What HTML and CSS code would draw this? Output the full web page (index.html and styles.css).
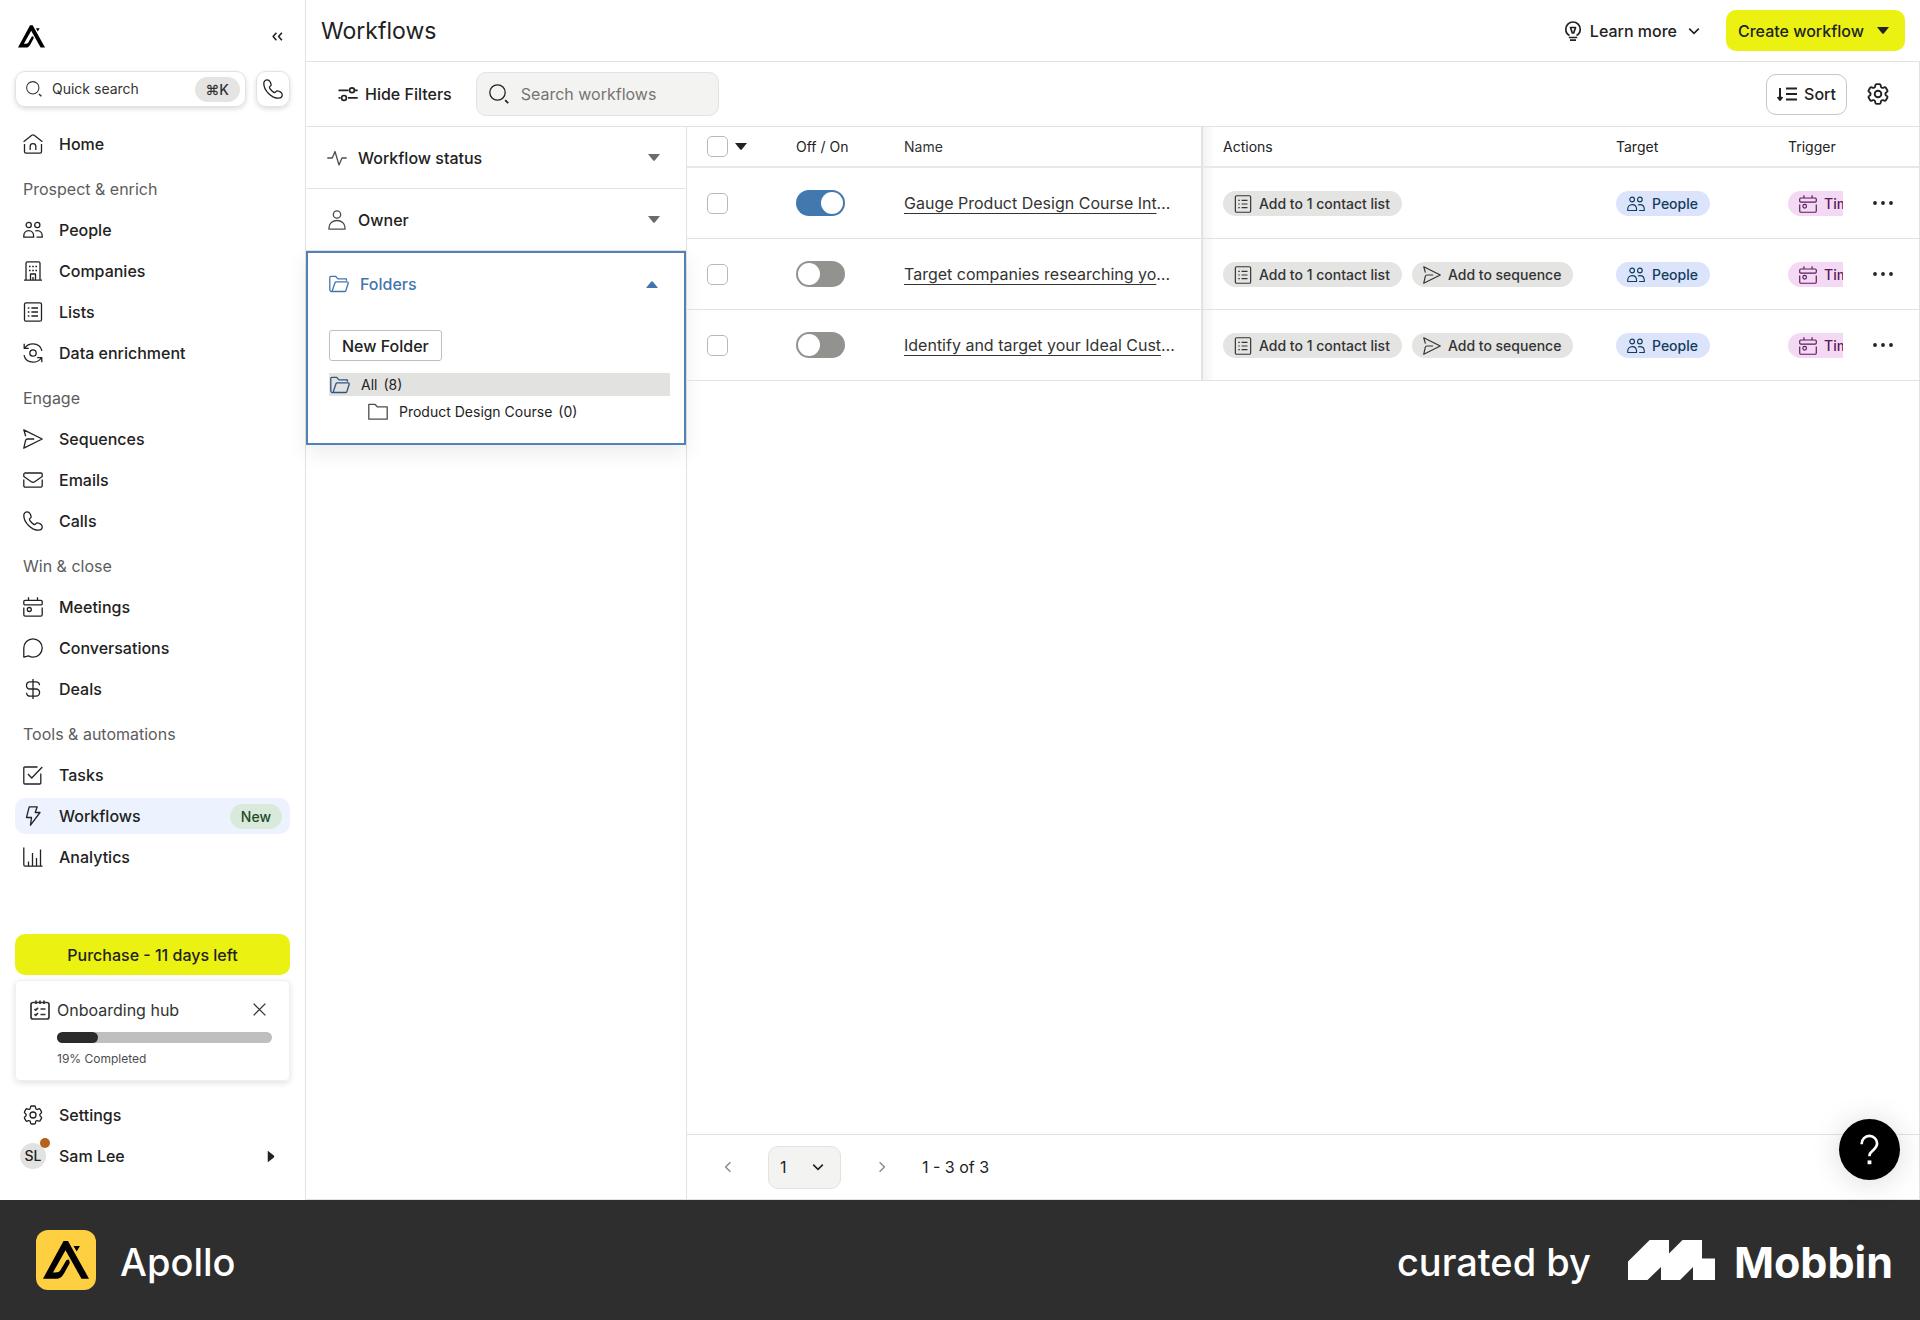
FILE: index.html
```html
<!DOCTYPE html>
<html lang="en">
<head>
<meta charset="UTF-8">
<meta name="viewport" content="width=device-width, initial-scale=1.0">
<title>Workflows - Apollo</title>
<link rel="stylesheet" href="styles.css">
</head>

<body>

<!-- Icon sprite -->
<svg class="sprite" aria-hidden="true">
  <symbol id="i-logo" viewBox="0 0 46 38"><path fill="currentColor" stroke="none" d="M20.5 0h4.500L46 37.700h-7.500L22.500 9.300 10 31.500h2c4 0 5-1.300 7-5l4.500-7.500 2.500-.500.800 3.500L21 32.500c-2.500 4-4 5.200-8 5.200H0zM30.500 5h6.400l-3.200 5.500z"/></symbol>
  <symbol id="i-collapse" viewBox="0 0 20 20"><path stroke-width="2.800" d="M8 3 2 10l6 7M18 3l-6 7 6 7"/></symbol>
  <symbol id="i-search" viewBox="0 0 20 20"><circle cx="8.500" cy="8.500" r="7.700"/><path stroke-width="1.800" d="m16.200 16.200 3 3"/></symbol>
  <symbol id="i-phone" viewBox="0 0 20 20"><path d="M4.200.8c1.200 0 2.200.6 2.900 1.900l.9 2c.4 1 .1 2-.8 2.600-.9.6-.9 1.400-.3 2.300 1 1.500 2.100 2.600 3.500 3.500.9.6 1.700.5 2.300-.3.7-.9 1.600-1.200 2.600-.8l2 .9c1.300.7 1.900 1.600 1.900 2.900 0 2-1.600 3.400-3.600 3.400C8.600 19.200.8 11.400.8 4.400.8 2.400 2.200.8 4.200.8z"/></symbol>
  <symbol id="i-home" viewBox="0 0 20 20"><path d="M.6 7.800 8.800 1.300a2 2 0 0 1 2.400 0l8.200 6.500M1.500 10v7.800a1.400 1.400 0 0 0 1.400 1.400h14.200a1.400 1.400 0 0 0 1.400-1.400V10M7.200 16v-3.500a2.800 2.800 0 0 1 5.600 0V16"/></symbol>
  <symbol id="i-people" viewBox="0 0 20 20"><circle cx="5.700" cy="5" r="2.600"/><circle cx="14.300" cy="5" r="2.600"/><path d="M.8 17.200v-1.400c0-3 2-5.200 4.900-5.200s4.900 2.200 4.900 5.200v1.400zM12.200 11c.6-.3 1.300-.4 2.100-.4 2.900 0 4.900 2.200 4.900 5.200v1.400h-5.700"/></symbol>
  <symbol id="i-building" viewBox="0 0 20 20"><path d="M1 19.200h18M3 19V2.200A1.400 1.400 0 0 1 4.400.8h11.200A1.400 1.400 0 0 1 17 2.200V19M7.500 19v-6h5v6M10 16v3M6 5.500h1.600M9.200 5.500h1.600M12.400 5.500H14M6 9.500h1.600M9.200 9.500h1.600M12.400 9.500H14"/></symbol>
  <symbol id="i-list" viewBox="0 0 20 20"><rect x="1.500" y=".8" width="17" height="18.400" rx="1.500"/><path d="M4.800 6h1.600M8.400 6h6.600M4.800 10h1.600M8.400 10h6.600M4.800 14h1.600M8.400 14h6.600"/></symbol>
  <symbol id="i-enrich" viewBox="0 0 20 20"><circle cx="10" cy="10" r="3.200"/><path d="M1.200.8v4.600h4.600M1.800 5C3.500 2.400 6.500.8 10 .8c4.500 0 8 2.800 9 7M18.800 19.200v-4.600h-4.600M18.200 15c-1.700 2.600-4.700 4.200-8.200 4.200-4.500 0-8-2.800-9-7"/></symbol>
  <symbol id="i-send" viewBox="0 0 20 20"><path d="M2.700 7.300.8.8 19.200 10 .8 19.200l1.700-7.600A2.200 2.200 0 0 1 4.700 10h6.500"/></symbol>
  <symbol id="i-mail" viewBox="0 0 20 20"><path d="M.8 6.500V4.300a1.300 1.300 0 0 1 1.300-1.300h15.800a1.300 1.300 0 0 1 1.300 1.300v2.200l-7.500 5.300a3 3 0 0 1-3.400 0zM.8 9.500v6.300a1.300 1.300 0 0 0 1.300 1.300h15.800a1.300 1.300 0 0 0 1.300-1.300V9.500"/></symbol>
  <symbol id="i-calendar" viewBox="0 0 20 20"><path d="M5.500.3v3M14.500.3v3M.8 10.500v7.300a1.400 1.400 0 0 0 1.400 1.400h15.600a1.400 1.400 0 0 0 1.400-1.400v-7.300"/><rect x=".8" y="3.300" width="18.400" height="4.600" rx="1.200"/><circle cx="6.300" cy="12.500" r="2"/></symbol>
  <symbol id="i-chat" viewBox="0 0 20 20"><path d="M.8 19.200V10A9.200 9.200 0 1 1 10 19.200c-1.800 0-3.200-.5-4.400-1.300z"/></symbol>
  <symbol id="i-dollar" viewBox="0 0 20 20"><path d="M10 0v20M16.500 6.200V6c0-1.900-1.500-3.200-3.400-3.200H7A3.400 3.400 0 0 0 3.500 6.200C3.500 8.400 5 10 7 10h6a3.600 3.600 0 0 1 0 7.200H6.900a3.400 3.400 0 0 1-3.400-3.400"/></symbol>
  <symbol id="i-task" viewBox="0 0 20 20"><path d="M14.500 2H1.900A1.100 1.100 0 0 0 .8 3.100v14.800A1.100 1.100 0 0 0 1.900 19h14.800a1.100 1.100 0 0 0 1.100-1.100V8.500M5 9l3.700 4L19.300 2"/></symbol>
  <symbol id="i-bolt" viewBox="0 0 20 20"><path d="M6.200.8h8l-2 5.700H17L7.500 19.200l1-7.700H3.500z"/></symbol>
  <symbol id="i-chart" viewBox="0 0 20 20"><path d="M.8.500v17.300a1.400 1.400 0 0 0 1.400 1.400H19.500M5.500 19v-4.500M9.500 19V6M13.500 19v-8M17.500 19V2.500"/></symbol>
  <symbol id="i-gear" viewBox="2 2 20 20"><circle cx="12" cy="12" r="3"/><path d="M9.594 3.940c.09-.542.56-.94 1.110-.94h2.593c.55 0 1.020.398 1.110.94l.213 1.281c.063.374.313.686.645.87.074.04.147.083.22.127.325.196.72.257 1.075.124l1.217-.456a1.125 1.125 0 0 1 1.370.49l1.296 2.247a1.125 1.125 0 0 1-.26 1.431l-1.003.827c-.293.241-.438.613-.43.992a7.723 7.723 0 0 1 0 .255c-.008.378.137.75.43.991l1.004.827c.424.35.534.955.26 1.430l-1.298 2.247a1.125 1.125 0 0 1-1.369.491l-1.217-.456c-.355-.133-.75-.072-1.076.124a6.470 6.470 0 0 1-.22.128c-.331.183-.581.495-.644.869l-.213 1.281c-.09.543-.56.94-1.110.94h-2.594c-.55 0-1.019-.398-1.110-.94l-.213-1.281c-.062-.374-.312-.686-.644-.87a6.520 6.520 0 0 1-.22-.127c-.325-.196-.72-.257-1.076-.124l-1.217.456a1.125 1.125 0 0 1-1.369-.49l-1.297-2.247a1.125 1.125 0 0 1 .26-1.431l1.004-.827c.292-.24.437-.613.43-.991a6.932 6.932 0 0 1 0-.255c.007-.38-.138-.751-.43-.992l-1.004-.827a1.125 1.125 0 0 1-.26-1.430l1.297-2.247a1.125 1.125 0 0 1 1.370-.491l1.216.456c.356.133.751.072 1.076-.124.072-.044.146-.086.22-.128.332-.183.582-.495.644-.869l.214-1.280Z"/></symbol>
  <symbol id="i-checklist" viewBox="0 0 20 20"><rect x="1" y="2.500" width="18" height="16.500" rx="2"/><path d="M6 .5v3.500M10 .5v3.500M14 .5v3.500M4.500 9l1.200 1.200L8 7.800M10.500 9H15.500M4.500 14.200l1.200 1.200L8 13M10.500 14.500H15.500"/></symbol>
  <symbol id="i-close" viewBox="0 0 20 20"><path stroke-width="2" d="m1 1 18 18M19 1 1 19"/></symbol>
  <symbol id="i-bulb" viewBox="0 0 20 20"><path d="M6.500 14.500C4 13.200 2.800 11 2.800 8.200a7.200 7.200 0 0 1 14.400 0c0 2.800-1.200 5-3.700 6.300M7.500 6.500h5L10.700 12H9.300zM5.800 16.500h8.400M7 19.200h6"/></symbol>
  <symbol id="i-chevron" viewBox="0 0 20 20"><path stroke-width="2.600" d="m2 6 8 8 8-8"/></symbol>
  <symbol id="i-caret" viewBox="0 0 12 7"><path fill="currentColor" stroke="none" d="M0 0h12L7 6.300a1.400 1.400 0 0 1-2 0z"/></symbol>
  <symbol id="i-filters" viewBox="0 0 20 20"><path d="M.5 6.300h10M17 6.300h2.700M.5 13.900h2M10 13.900h9.700"/><circle cx="14" cy="6.300" r="2.400"/><circle cx="6" cy="13.900" r="2.400"/></symbol>
  <symbol id="i-pulse" viewBox="0 0 20 20"><path d="M.3 10h5L8 3.500 12 17l3-7h4.700"/></symbol>
  <symbol id="i-user" viewBox="0 0 20 20"><circle cx="10" cy="4.500" r="3.700"/><path d="M2 19.200v-1.700a8 7 0 0 1 16 0v1.700z"/></symbol>
  <symbol id="i-folder-open" viewBox="0 0 20 20"><path d="M3 17.500a1.800 1.800 0 0 1-2.200-1.700V3.500a1.200 1.200 0 0 1 1.200-1.200h4.500l2.500 2.600h8.400v1.800M3 17.500 6 8.700a1.200 1.200 0 0 1 1.200-.8h11a1 1 0 0 1 1 1.300l-2.400 7.500a1.200 1.200 0 0 1-1.200.8z"/></symbol>
  <symbol id="i-folder" viewBox="0 0 20 20"><path d="M.8 17.200V2.300h6l2.500 2.500h9.900v12.400z"/></symbol>
  <symbol id="i-sort" viewBox="0 0 20 20"><path stroke-width="2" d="M3 4v12M.6 13 3 16l2.400-3M9 4.500h11M9 10h11M9 15.500h11"/></symbol>
  <symbol id="i-dots" viewBox="0 0 20 20"><g fill="currentColor" stroke="none"><circle cx="2" cy="10" r="1.900"/><circle cx="10" cy="10" r="1.900"/><circle cx="18" cy="10" r="1.900"/></g></symbol>
  <symbol id="i-help" viewBox="0 0 20 32"><path stroke-width="2.800" d="M1.800 10.500V9.800a8 8 0 0 1 16.200 0c0 3-1.500 4.500-3.600 6.400S10 19.300 10 22.200v1"/><rect x="8" y="27.500" width="4" height="4" fill="currentColor" stroke="none"/></symbol>
  <symbol id="i-mobbin" viewBox="0 0 87 40"><path fill="currentColor" stroke="none" d="M0 21.600 21.700 0H41v13.500L54.500 0H74v18.500h13V40H65V27L52 40H33V27L19.500 40H0z"/></symbol>
</svg>

<div class="app">

  <aside class="sidebar">
    <div class="sidebar-top">
      <a href="#" class="logo" aria-label="Apollo"><svg><use href="#i-logo"/></svg></a>
      <button class="collapse" aria-label="Collapse sidebar"><svg><use href="#i-collapse"/></svg></button>
    </div>

    <div class="quick">
      <button class="quick-search">
        <svg class="icon small"><use href="#i-search"/></svg>
        <span>Quick search</span>
        <kbd>⌘K</kbd>
      </button>
      <button class="quick-call" aria-label="Call"><svg class="icon"><use href="#i-phone"/></svg></button>
    </div>

    <nav class="nav">
      <a href="#"><svg class="icon"><use href="#i-home"/></svg>Home</a>
      <h2>Prospect &amp; enrich</h2>
      <a href="#"><svg class="icon"><use href="#i-people"/></svg>People</a>
      <a href="#"><svg class="icon"><use href="#i-building"/></svg>Companies</a>
      <a href="#"><svg class="icon"><use href="#i-list"/></svg>Lists</a>
      <a href="#"><svg class="icon"><use href="#i-enrich"/></svg>Data enrichment</a>
      <h2>Engage</h2>
      <a href="#"><svg class="icon"><use href="#i-send"/></svg>Sequences</a>
      <a href="#"><svg class="icon"><use href="#i-mail"/></svg>Emails</a>
      <a href="#"><svg class="icon"><use href="#i-phone"/></svg>Calls</a>
      <h2>Win &amp; close</h2>
      <a href="#"><svg class="icon"><use href="#i-calendar"/></svg>Meetings</a>
      <a href="#"><svg class="icon"><use href="#i-chat"/></svg>Conversations</a>
      <a href="#"><svg class="icon"><use href="#i-dollar"/></svg>Deals</a>
      <h2>Tools &amp; automations</h2>
      <a href="#"><svg class="icon"><use href="#i-task"/></svg>Tasks</a>
      <a href="#" class="active"><svg class="icon"><use href="#i-bolt"/></svg>Workflows<span class="badge-new">New</span></a>
      <a href="#"><svg class="icon"><use href="#i-chart"/></svg>Analytics</a>
    </nav>

    <div class="sidebar-bottom">
      <button class="btn-primary purchase">Purchase - 11 days left</button>

      <div class="onboarding">
        <div class="onboarding-head">
          <svg class="icon heavy"><use href="#i-checklist"/></svg>
          <span>Onboarding hub</span>
          <button class="close" aria-label="Close"><svg><use href="#i-close"/></svg></button>
        </div>
        <div class="progress"><div class="progress-bar" style="width: 19%"></div></div>
        <p>19% Completed</p>
      </div>

      <div class="nav">
        <a href="#"><svg class="icon"><use href="#i-gear"/></svg>Settings</a>
        <a href="#"><span class="avatar">SL</span>Sam Lee<svg class="caret right"><use href="#i-caret"/></svg></a>
      </div>
    </div>
  </aside>

  <main class="main">
    <header class="topbar">
      <h1>Workflows</h1>
      <button class="btn-text learn"><svg class="icon heavy"><use href="#i-bulb"/></svg>Learn more<svg class="chevron"><use href="#i-chevron"/></svg></button>
      <button class="btn-primary create">Create workflow<svg class="caret"><use href="#i-caret"/></svg></button>
    </header>

    <div class="toolbar">
      <button class="btn-text filters-toggle"><svg class="icon heavy"><use href="#i-filters"/></svg>Hide Filters</button>
      <label class="search">
        <svg class="icon"><use href="#i-search"/></svg>
        <input type="text" placeholder="Search workflows" aria-label="Search workflows">
      </label>
      <button class="btn-sort"><svg class="icon"><use href="#i-sort"/></svg>Sort</button>
      <button class="btn-gear" aria-label="Table settings"><svg class="icon heavy"><use href="#i-gear"/></svg></button>
    </div>

    <div class="content">
      <div class="filters">
        <button class="filter-head"><svg class="icon"><use href="#i-pulse"/></svg>Workflow status<svg class="caret"><use href="#i-caret"/></svg></button>
        <button class="filter-head"><svg class="icon"><use href="#i-user"/></svg>Owner<svg class="caret"><use href="#i-caret"/></svg></button>
        <section class="filter-open">
          <button class="filter-head"><svg class="icon"><use href="#i-folder-open"/></svg>Folders<svg class="caret up"><use href="#i-caret"/></svg></button>
          <div class="folders">
            <button class="btn-folder">New Folder</button>
            <ul>
              <li class="selected"><svg class="icon"><use href="#i-folder-open"/></svg>All <span>(8)</span></li>
              <li class="child"><svg class="icon"><use href="#i-folder"/></svg>Product Design Course <span>(0)</span></li>
            </ul>
          </div>
        </section>
      </div>

      <div class="results">
        <table>
          <colgroup>
            <col class="c-check"><col class="c-toggle"><col class="c-name"><col class="c-actions"><col class="c-target"><col class="c-trigger"><col class="c-menu">
          </colgroup>
          <thead>
            <tr>
              <th><div class="check-all"><input type="checkbox" class="check" aria-label="Select all"><svg class="caret"><use href="#i-caret"/></svg></div></th>
              <th>Off / On</th>
              <th class="name">Name</th>
              <th class="actions">Actions</th>
              <th>Target</th>
              <th class="trigger">Trigger</th>
              <th></th>
            </tr>
          </thead>
          <tbody>
            <tr>
              <td><input type="checkbox" class="check" aria-label="Select workflow"></td>
              <td><input type="checkbox" role="switch" class="switch" aria-label="Workflow on" checked></td>
              <td class="name"><a href="#">Gauge Product Design Course Interest</a></td>
              <td class="actions"><span class="chip"><svg class="icon"><use href="#i-list"/></svg>Add to 1 contact list</span></td>
              <td><span class="chip people"><svg class="icon"><use href="#i-people"/></svg>People</span></td>
              <td class="trigger"><span class="chip time"><svg class="icon"><use href="#i-calendar"/></svg>Time-based</span></td>
              <td class="menu"><button aria-label="More"><svg class="icon"><use href="#i-dots"/></svg></button></td>
            </tr>
            <tr>
              <td><input type="checkbox" class="check" aria-label="Select workflow"></td>
              <td><input type="checkbox" role="switch" class="switch" aria-label="Workflow on"></td>
              <td class="name"><a href="#">Target companies researching your keywords</a></td>
              <td class="actions"><span class="chip"><svg class="icon"><use href="#i-list"/></svg>Add to 1 contact list</span><span class="chip"><svg class="icon"><use href="#i-send"/></svg>Add to sequence</span></td>
              <td><span class="chip people"><svg class="icon"><use href="#i-people"/></svg>People</span></td>
              <td class="trigger"><span class="chip time"><svg class="icon"><use href="#i-calendar"/></svg>Time-based</span></td>
              <td class="menu"><button aria-label="More"><svg class="icon"><use href="#i-dots"/></svg></button></td>
            </tr>
            <tr>
              <td><input type="checkbox" class="check" aria-label="Select workflow"></td>
              <td><input type="checkbox" role="switch" class="switch" aria-label="Workflow on"></td>
              <td class="name"><a href="#">Identify and target your Ideal Customer Profile</a></td>
              <td class="actions"><span class="chip"><svg class="icon"><use href="#i-list"/></svg>Add to 1 contact list</span><span class="chip"><svg class="icon"><use href="#i-send"/></svg>Add to sequence</span></td>
              <td><span class="chip people"><svg class="icon"><use href="#i-people"/></svg>People</span></td>
              <td class="trigger"><span class="chip time"><svg class="icon"><use href="#i-calendar"/></svg>Time-based</span></td>
              <td class="menu"><button aria-label="More"><svg class="icon"><use href="#i-dots"/></svg></button></td>
            </tr>
          </tbody>
        </table>

        <div class="pagination">
          <button class="page-btn" aria-label="Previous page"><svg class="chevron left"><use href="#i-chevron"/></svg></button>
          <div class="page-select">
            <select aria-label="Page"><option>1</option></select>
            <svg class="chevron"><use href="#i-chevron"/></svg>
          </div>
          <button class="page-btn" aria-label="Next page"><svg class="chevron right"><use href="#i-chevron"/></svg></button>
          <span>1 - 3 of 3</span>
        </div>
      </div>
    </div>

    <button class="help" aria-label="Help"><svg><use href="#i-help"/></svg></button>
  </main>
</div>

<footer class="credit">
  <div class="credit-icon"><svg><use href="#i-logo"/></svg></div>
  <span class="credit-app">Apollo</span>
  <span class="credit-by">curated by</span>
  <svg class="credit-logo"><use href="#i-mobbin"/></svg>
  <strong>Mobbin</strong>
</footer>

</body>
</html>
```

FILE: styles.css
```css
* { margin: 0; padding: 0; box-sizing: border-box; }
body { font-family: Inter, "Liberation Sans", sans-serif; font-size: 16px; line-height: 24px; color: #222; background-color: #fff; }
button, input, select { font: inherit; color: inherit; background: none; border: none; }
button, select { cursor: pointer; }
a { color: inherit; text-decoration: none; }
ul { list-style: none; }
svg { fill: none; stroke: currentColor; stroke-width: 1.3; stroke-linejoin: round; flex-shrink: 0; display: block; }
.sprite { display: none; }
.icon { width: 20px; height: 20px; }
.icon.small { width: 16px; height: 16px; }
.icon.heavy { stroke-width: 1.7; }
.caret { width: 12px; height: 7px; }
.caret.up { transform: rotate(180deg); }
.caret.right { transform: rotate(-90deg); }
.chevron { width: 12px; height: 12px; }
.chevron.left { transform: rotate(90deg); }
.chevron.right { transform: rotate(-90deg); }

.app { display: flex; min-height: calc(100vh - 120px); }

/* Sidebar */
.sidebar { width: 306px; flex-shrink: 0; padding: 20px 15px 26px; border-right: 1px solid #e2e2e0; display: flex; flex-direction: column; }
.sidebar-top { display: flex; justify-content: space-between; align-items: center; height: 32px; padding: 0 7px 0 3px; }
.logo { color: #000; }
.logo svg { width: 27px; height: 23px; }
.collapse svg { width: 11px; height: 11px; }
.quick { display: flex; gap: 10px; margin-top: 19px; }
.quick button { height: 36px; border: 1px solid #e2e2e0; border-radius: 10px; box-shadow: 0 2px 5px rgba(0, 0, 0, 0.14); display: flex; align-items: center; }
.quick-search { flex: 1; gap: 10px; padding: 0 5px 0 10px; color: #333; }
.quick-search span { font-size: 14px; }
.quick-search kbd { margin-left: auto; padding: 0 11px; background-color: #e4e4e2; border-radius: 13px; font-family: Inter, "DejaVu Sans", sans-serif; font-size: 14px; font-weight: 500; line-height: 25px; }
.quick-call { width: 34px; justify-content: center; }
.nav { display: flex; flex-direction: column; gap: 5px; }
.quick + .nav { margin-top: 19px; }
.nav a { display: flex; align-items: center; gap: 16px; height: 36px; padding: 0 8px; border-radius: 10px; font-weight: 500; }
.nav a.active { background-color: #edf3fe; }
.nav h2 { margin: 2px 0 -2px; padding: 8px; font-size: 16px; font-weight: 400; color: #5c5c5c; }
.badge-new { margin-left: auto; padding: 0 11px; background-color: #d9e9da; color: #1d4a2a; border-radius: 13px; font-size: 14px; line-height: 25px; }
.sidebar-bottom { margin-top: auto; }
.btn-primary { height: 41px; background-color: #ebf212; border-radius: 10px; font-weight: 500; }
.purchase { width: 100%; }
.onboarding { margin: 5px 0 16px; padding: 16px 17px 12px 14px; height: 101px; border: 1px solid #f0f0ee; border-radius: 5px; box-shadow: 0 2px 6px rgba(0, 0, 0, 0.12); }
.onboarding-head { display: flex; align-items: center; gap: 7px; color: #333; }
.close { margin-left: auto; padding: 6px; }
.close svg { width: 13px; height: 13px; }
.progress { margin: 10px 0 8px 27px; height: 11px; border-radius: 6px; background-color: #bfbfbd; }
.progress-bar { height: 11px; border-radius: 6px; background-color: #2b2b2b; }
.onboarding p { margin-left: 27px; font-size: 12px; line-height: 16px; color: #4d4d4d; }
.avatar { position: relative; width: 26px; height: 26px; margin: 0 -3px; background-color: #e2e2e0; border-radius: 50%; font-size: 14px; line-height: 26px; text-align: center; }
.avatar::after { content: ""; position: absolute; top: -5px; right: -4px; width: 10px; height: 10px; border-radius: 50%; background-color: #b9601b; }
.nav .caret { margin-left: auto; margin-right: 5px; }

/* Main */
.main { position: relative; flex: 1; min-width: 0; display: flex; flex-direction: column; }
.topbar { display: flex; align-items: center; height: 62px; padding: 0 15px; border-bottom: 1px solid #e2e2e0; }
h1 { margin-right: auto; font-size: 23px; font-weight: 400; line-height: 32px; }
.btn-text { display: flex; align-items: center; gap: 7px; font-weight: 500; }
.learn .chevron { margin-left: 4px; }
.create { display: flex; align-items: center; gap: 13px; margin-left: 26px; padding: 0 16px 0 12px; }
.toolbar { display: flex; align-items: center; height: 65px; padding: 0 20px 0 32px; border: solid #e2e2e0; border-width: 0 1px 1px 0; }
.search { display: flex; align-items: center; gap: 12px; width: 243px; height: 44px; margin-left: 24px; padding: 0 12px; background-color: #f3f3f1; border: 1px solid #e2e2e0; border-radius: 10px; }
.search input { width: 100%; outline: none; }
.search input::placeholder { color: #757573; }
.btn-sort { display: flex; align-items: center; gap: 7px; height: 41px; margin-left: auto; padding: 0 10px; border: 1px solid #c6c6c4; border-radius: 10px; font-weight: 500; }
.btn-gear { padding: 10px; margin-left: 10px; }
.btn-gear .icon { width: 22px; height: 22px; }
.content { display: flex; flex: 1; border: solid #e2e2e0; border-width: 0 1px 1px 0; }

/* Filters */
.filters { width: 381px; flex-shrink: 0; border-right: 1px solid #e2e2e0; }
.filter-head { display: flex; align-items: center; gap: 11px; width: 100%; height: 62px; padding: 0 26px 0 21px; border-bottom: 1px solid #e2e2e0; font-weight: 500; }
.filter-head .icon { color: #4d4d4d; }
.filter-head .caret { margin-left: auto; color: #6b6b69; }
.filter-open { border: 2px solid #5181b5; box-shadow: 0 8px 20px rgba(0, 0, 0, 0.08); }
.filter-open .filter-head { border: none; color: #4175ad; }
.filter-open .filter-head .icon, .filter-open .filter-head .caret { color: inherit; }
.folders { padding: 15px 14px 20px 21px; }
.btn-folder { display: block; height: 31px; padding: 0 12px; border: 1px solid #bfbfbd; border-radius: 3px; font-weight: 500; line-height: 28px; }
.folders ul { margin-top: 12px; }
.folders li { display: flex; align-items: center; gap: 11px; height: 23px; padding-left: 1px; font-size: 14px; }
.folders li span { margin-left: -5px; }
.folders li .icon { color: #4d4d4d; }
.folders .selected { background-color: #e2e2e0; }
.folders .selected .icon { color: #2f5583; }
.folders .child { margin-top: 4px; padding-left: 39px; }

/* Table */
.results { flex: 1; min-width: 0; display: flex; flex-direction: column; }
table { width: 100%; table-layout: fixed; border-collapse: separate; border-spacing: 0; }
.c-check { width: 93px; }
.c-toggle { width: 108px; }
.c-name { width: 315px; }
.c-target { width: 172px; }
.c-trigger { width: 71px; }
.c-menu { width: 76px; }
th { height: 41px; padding: 0 16px; border-bottom: 2px solid #e8e8e6; font-size: 14px; font-weight: 400; text-align: left; }
td { height: 71px; padding: 0 16px; border-bottom: 1px solid #e2e2e0; white-space: nowrap; }
th:first-child, td:first-child { padding-left: 20px; }
.name { padding-right: 24px; border-right: 2px solid #e2e2e0; overflow: hidden; text-overflow: ellipsis; color: #333; }
.name a { text-decoration: underline; text-underline-offset: 4px; }
.actions { padding-left: 20px; padding-right: 0; background-image: linear-gradient(to right, rgba(0, 0, 0, 0.05), transparent 12px); }
.trigger { padding-right: 0; overflow: hidden; }
th.trigger { overflow: visible; }
.check-all { display: flex; align-items: center; gap: 7px; }
.check { appearance: none; display: block; width: 21px; height: 21px; border: 1px solid #b8b8b6; border-radius: 5px; }
.switch { appearance: none; display: block; width: 49px; height: 26px; padding: 2px; border-radius: 13px; background-color: #92928e; cursor: pointer; }
.switch::before { content: ""; display: block; width: 22px; height: 22px; border-radius: 50%; background-color: #fff; }
.switch:checked { background-color: #4178ae; }
.switch:checked::before { margin-left: auto; }
.chip { display: inline-flex; align-items: center; gap: 7px; height: 25px; padding: 0 12px 0 11px; border-radius: 13px; background-color: #e4e4e2; color: #333; font-size: 14px; font-weight: 500; vertical-align: middle; }
.chip + .chip { margin-left: 10px; }
.chip .icon { width: 18px; height: 18px; }
.chip.people { background-color: #dbe4fb; color: #143c5c; }
.chip.time { background-color: #f4d9f5; color: #5a1a5c; }
.menu button { padding: 10px 0; }
.menu { padding-left: 30px; }
.pagination { display: flex; align-items: center; height: 65px; margin-top: auto; padding: 0 35px; border-top: 1px solid #e2e2e0; }
.page-btn { color: #8f8f8d; }
.page-select { position: relative; margin: 0 35px 0 34px; }
.page-select select { appearance: none; width: 73px; height: 43px; padding: 0 11px; background-color: #f3f3f1; border: 1px solid #e2e2e0; border-radius: 10px; }
.page-select .chevron { position: absolute; top: 15px; right: 17px; pointer-events: none; }
.pagination > span { margin-left: 34px; }
.help { position: absolute; right: 20px; bottom: 20px; width: 61px; height: 61px; display: flex; align-items: center; justify-content: center; background-color: #000; color: #fff; border-radius: 50%; box-shadow: 0 2px 30px rgba(0, 0, 0, 0.15); }
.help svg { width: 19px; height: 31px; }

/* Credit bar */
.credit { display: flex; align-items: center; height: 120px; padding: 0 27px 0 36px; background-color: #2e2e2e; color: #fff; font-size: 38px; font-weight: 500; line-height: 48px; }
.credit span, .credit strong { padding-top: 4px; }
.credit-icon { width: 60px; height: 60px; display: flex; align-items: center; justify-content: center; background-color: #ffcf42; color: #000; border-radius: 12px; }
.credit-icon svg { width: 46px; height: 38px; }
.credit-app { margin-left: 24px; }
.credit-by { margin-left: auto; }
.credit-logo { width: 87px; height: 40px; margin: 0 19px 0 37px; }
.credit strong { font-size: 43px; font-weight: 700; }
```
